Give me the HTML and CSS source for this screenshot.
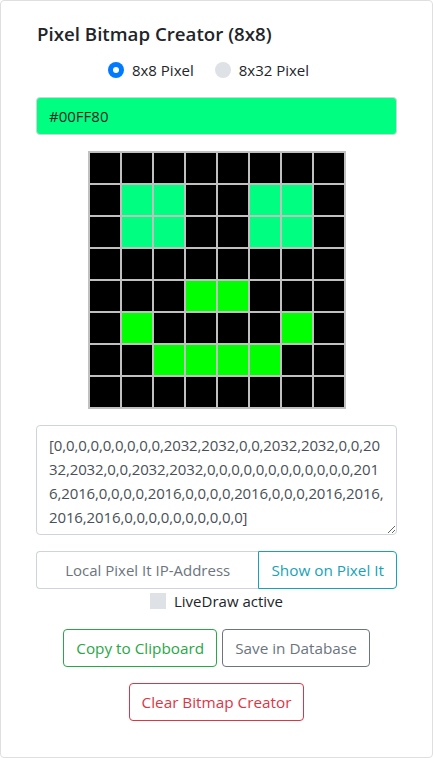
FILE: index.html
```html
<!DOCTYPE html>
<html lang="en">
<head>
<meta charset="utf-8">
<title>Pixel Bitmap Creator</title>
<link rel="stylesheet" href="styles.css">
</head>
<body>
<div class="card">
  <h5 class="title">Pixel Bitmap Creator (8x8)</h5>
  <div class="radios">
    <label class="radio"><span class="dot checked"></span>8x8 Pixel</label>
    <label class="radio"><span class="dot"></span>8x32 Pixel</label>
  </div>
  <div class="color-input">#00FF80</div>
  <div class="grid">
    <i></i><i></i><i></i><i></i><i></i><i></i><i></i><i></i>
    <i></i><i class="a"></i><i class="a"></i><i></i><i></i><i class="a"></i><i class="a"></i><i></i>
    <i></i><i class="a"></i><i class="a"></i><i></i><i></i><i class="a"></i><i class="a"></i><i></i>
    <i></i><i></i><i></i><i></i><i></i><i></i><i></i><i></i>
    <i></i><i></i><i></i><i class="g"></i><i class="g"></i><i></i><i></i><i></i>
    <i></i><i class="g"></i><i></i><i></i><i></i><i></i><i class="g"></i><i></i>
    <i></i><i></i><i class="g"></i><i class="g"></i><i class="g"></i><i class="g"></i><i></i><i></i>
    <i></i><i></i><i></i><i></i><i></i><i></i><i></i><i></i>
  </div>
  <textarea class="output">[0,0,0,0,0,0,0,0,0,2032,2032,0,0,2032,2032,0,0,2032,2032,0,0,2032,2032,0,0,0,0,0,0,0,0,0,0,0,0,2016,2016,0,0,0,0,2016,0,0,0,0,2016,0,0,0,2016,2016,2016,2016,0,0,0,0,0,0,0,0,0,0]</textarea>
  <div class="input-group">
    <input class="ip" type="text" placeholder="Local Pixel It IP-Address">
    <button class="btn btn-info">Show on Pixel It</button>
  </div>
  <label class="check"><span class="box"></span>LiveDraw active</label>
  <div class="btn-row">
    <button class="btn btn-success">Copy to Clipboard</button>
    <button class="btn btn-secondary">Save in Database</button>
  </div>
  <div class="btn-row">
    <button class="btn btn-danger">Clear Bitmap Creator</button>
  </div>
</div>
</body>
</html>
```
FILE: styles.css
```css
* { box-sizing: border-box; }
html, body { margin: 0; padding: 0; background: #fff; }
body {
  font-family: "Open Sans", "Noto Sans", sans-serif;
  font-size: 15px;
  line-height: 24px;
  color: #212529;
}
.card {
  width: 433px;
  height: 758px;
  border: 1px solid #dfdfdf;
  border-radius: 4px;
  padding: 21px 35px 0;
  display: flex;
  flex-direction: column;
}
.title {
  margin: 0 0 12px 1px;
  font-size: 18.7px;
  font-weight: 600;
  line-height: 24px;
  color: #212529;
}
.radios {
  display: flex;
  justify-content: center;
  gap: 21px;
  height: 24px;
  padding-right: 16px;
}
.radio {
  display: flex;
  align-items: center;
  gap: 8px;
}
.dot {
  width: 16px;
  height: 16px;
  border-radius: 50%;
  background: #dee2e6;
  display: inline-flex;
  align-items: center;
  justify-content: center;
}
.dot.checked { background: #007bff; }
.dot.checked::after {
  content: "";
  width: 6px;
  height: 6px;
  border-radius: 50%;
  background: #fff;
}
.color-input {
  margin-top: 15px;
  height: 38px;
  background: #00ff80;
  border: 1px solid #ced4da;
  border-radius: 4px;
  padding: 6px 12px;
  color: #212529;
}
.grid {
  margin: 16px auto 0;
  width: 258px;
  height: 258px;
  padding: 2px;
  background: #c0c0c0;
  display: grid;
  grid-template-columns: repeat(8, 30px);
  grid-template-rows: repeat(8, 30px);
  gap: 2px;
}
.grid i { background: #000; }
.grid i.a { background: #00ff80; }
.grid i.g { background: #00ff00; }
.output {
  margin-top: 16px;
  width: 100%;
  height: 110px;
  border: 1px solid #ced4da;
  border-radius: 4px;
  padding: 7px 12px 5px 12px;
  font-family: inherit;
  font-size: 15px;
  letter-spacing: -0.12px;
  line-height: 24px;
  color: #495057;
  word-break: normal;
  overflow-wrap: anywhere;
  line-break: anywhere;
  resize: vertical;
}
.input-group {
  margin-top: 16px;
  display: flex;
  height: 38px;
}
.ip {
  flex: 1;
  min-width: 0;
  border: 1px solid #ced4da;
  border-right: 0;
  border-radius: 4px 0 0 4px;
  padding: 6px 12px;
  font-family: inherit;
  font-size: 15px;
  text-align: center;
  color: #495057;
}
.ip::placeholder { color: #6c757d; opacity: 1; }
.btn {
  font-family: inherit;
  font-size: 15.3px;
  line-height: 24px;
  padding: 6px 12px;
  border: 1px solid;
  border-radius: 4px;
  background: #fff;
  height: 38px;
}
.btn-info { color: #17a2b8; border-color: #17a2b8; border-radius: 0 4px 4px 0; }
.btn-success { color: #28a745; border-color: #28a745; }
.btn-secondary { color: #6c757d; border-color: #6c757d; }
.btn-danger { color: #dc3545; border-color: #dc3545; }
.check {
  display: flex;
  justify-content: center;
  align-items: center;
  gap: 8px;
  height: 24px;
}
.box {
  width: 16px;
  height: 16px;
  background: #dee2e6;
}
.btn-row {
  margin-top: 16px;
  display: flex;
  justify-content: center;
  gap: 5px;
}
```
